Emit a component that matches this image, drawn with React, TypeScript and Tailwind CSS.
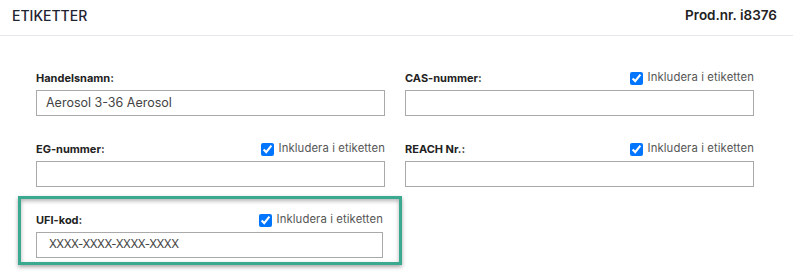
import React from "react";

function Check() {
  return (
    <label className="flex items-center gap-[5px] text-[11.3px] tracking-[0.1px] text-[#555] leading-none">
      <input type="checkbox" checked readOnly className="m-0 h-[13px] w-[13px] accent-[#0075ff]" />
      <span>Inkludera i etiketten</span>
    </label>
  );
}

function Field({
  label,
  value,
  check = true,
  pad = "pl-[9px]",
  size = "text-[12.5px]",
}: {
  label: string;
  value?: string;
  check?: boolean;
  pad?: string;
  size?: string;
}) {
  return (
    <div className="flex flex-col">
      <div className="flex h-[20px] items-center justify-between">
        <span className="text-[11px] font-bold text-[#222]">{label}</span>
        {check && <Check />}
      </div>
      <div
        className={`mt-[2px] flex h-[26px] items-center border border-[#a9a9a9] bg-white ${pad} ${size} text-[#444]`}
      >
        {value}
      </div>
    </div>
  );
}

export default function App() {
  return (
    <div className="h-[274px] w-[793px] bg-white" style={{ fontFamily: "Inter, 'Noto Sans', sans-serif" }}>
      <div className="flex h-[36px] items-center justify-between border-b border-[#e5e7eb] pb-[4px] pl-[12px] pr-[16px]">
        <span className="text-[14px] font-medium text-[#1f2433]">ETIKETTER</span>
        <span className="text-[13.5px] font-semibold text-[#222]">Prod.nr. i8376</span>
      </div>
      <div className="grid grid-cols-2 gap-x-[20px] gap-y-[23px] pl-[36px] pr-[39px] pt-[32px]">
        <Field label="Handelsnamn:" value="Aerosol 3-36 Aerosol" check={false} />
        <Field label="CAS-nummer:" />
        <Field label="EG-nummer:" />
        <Field label="REACH Nr.:" />
        <div className="relative mr-[2px]">
          <Field label="UFI-kod:" value="XXXX-XXXX-XXXX-XXXX" pad="pl-[12px] tracking-[-0.5px]" size="text-[11.5px]" />
          <div className="pointer-events-none absolute -left-[18px] -right-[19px] -top-[14px] -bottom-[7px] border-[3px] border-[#3aa98f] shadow-[0_2px_4px_rgba(0,0,0,0.35),inset_0_2px_4px_rgba(0,0,0,0.3)]" />
        </div>
      </div>
    </div>
  );
}
